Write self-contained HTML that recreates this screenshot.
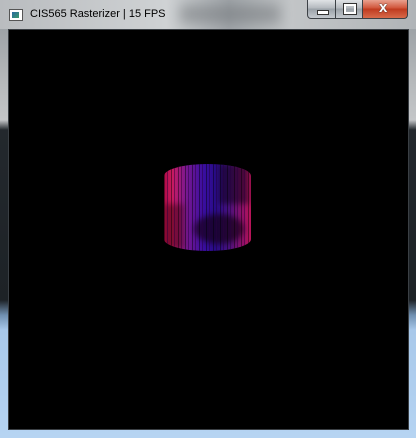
<!DOCTYPE html>
<html><head><meta charset="utf-8"><style>
html,body{margin:0;padding:0;width:416px;height:438px;overflow:hidden;background:#000}
#win{position:absolute;left:0;top:0;width:416px;height:438px;
background:linear-gradient(180deg,#a9acaf 0px,#c9cccf 10px,#9ea3a7 30px,#b5b8ba 80px,#c4c6c8 120px,#23282d 130px,#1d2226 300px,#6f8fb0 315px,#a8c8ea 330px,#b6d4f2 438px);}
#tb{position:absolute;left:0;top:0;width:416px;height:29px;
background:linear-gradient(90deg,#b9bcbf 0,#cfd2d4 40%,#a0a5a9 55%,#c2c5c7 70%,#b0b4b7 100%);}
#blur{position:absolute;left:180px;top:5px;width:100px;height:18px;background:#6a6e72;filter:blur(6px);opacity:.45}
#canvas{position:absolute;left:8px;top:29px;width:401px;height:401px;background:#000;border:1px solid #3a3f44;box-sizing:border-box}
#title{position:absolute;left:30px;top:8px;font:11px "Liberation Sans",sans-serif;color:#000}
#icon{position:absolute;left:9px;top:9px;width:14px;height:12px;background:#fff;border:1px solid #555;box-sizing:border-box}
#icon:before{content:"";position:absolute;left:2px;top:2px;width:7px;height:6px;background:linear-gradient(135deg,#2a6aa0,#3a9a6a)}
.btn{position:absolute;top:0;height:19px;border:1px solid #3c4146;border-top:none;box-sizing:border-box;
background:linear-gradient(180deg,#e0e3e6,#b4b9be 45%,#9aa1a8 50%,#c4c9ce);}
#min{left:307px;width:29px;border-radius:0 0 0 4px}
#max{left:335px;width:28px}
#cls{left:362px;width:46px;border-radius:0 0 4px 0;background:linear-gradient(180deg,#e8a18f,#d0553a 45%,#bf3a1f 50%,#d86a4a)}
#min:after{content:"";position:absolute;left:9px;top:10px;width:10px;height:3px;background:#fff;border:1px solid #333}
#max:after{content:"";position:absolute;left:8px;top:4px;width:8px;height:6px;border:2px solid #fff;outline:1px solid #333}
#cls span{position:absolute;left:16px;top:-1px;font:bold 15px "Liberation Sans",sans-serif;color:#fff;text-shadow:0 0 1px #333,0 0 1px #333}
#obj{position:absolute;left:164px;top:164px;width:87px;height:87px;border-radius:44px 44px 44px 44px/12px 12px 12px 12px;overflow:hidden;
background:linear-gradient(90deg,#b00c48 0,#c81a60 10%,#7a1890 25%,#3a0ea0 45%,#280c88 60%,#4a1280 75%,#901068 90%,#b81458 100%);}
#stripes{position:absolute;inset:0;
background:repeating-linear-gradient(90deg,rgba(0,0,0,.45) 0 1px,transparent 1px 3px,rgba(40,0,60,.5) 3px 4px,transparent 4px 7px);}
#dark1{position:absolute;left:30px;top:50px;width:50px;height:30px;border-radius:50%;background:rgba(20,0,20,.7);filter:blur(3px)}
#dark2{position:absolute;left:0;top:40px;width:20px;height:45px;background:rgba(60,0,10,.5);filter:blur(3px)}
#dark3{position:absolute;left:55px;top:0;width:30px;height:40px;background:rgba(10,0,20,.55);filter:blur(3px)}
</style></head><body>
<div id="win">
<div id="tb"><div id="blur"></div></div>
<div id="icon"></div>
<div id="title">CIS565 Rasterizer | 15 FPS</div>
<div class="btn" id="min"></div>
<div class="btn" id="max"></div>
<div class="btn" id="cls"><span>x</span></div>
<div id="canvas"></div>
<div id="obj"><div id="dark1"></div><div id="dark2"></div><div id="dark3"></div><div id="stripes"></div></div>
</div>
</body></html>
